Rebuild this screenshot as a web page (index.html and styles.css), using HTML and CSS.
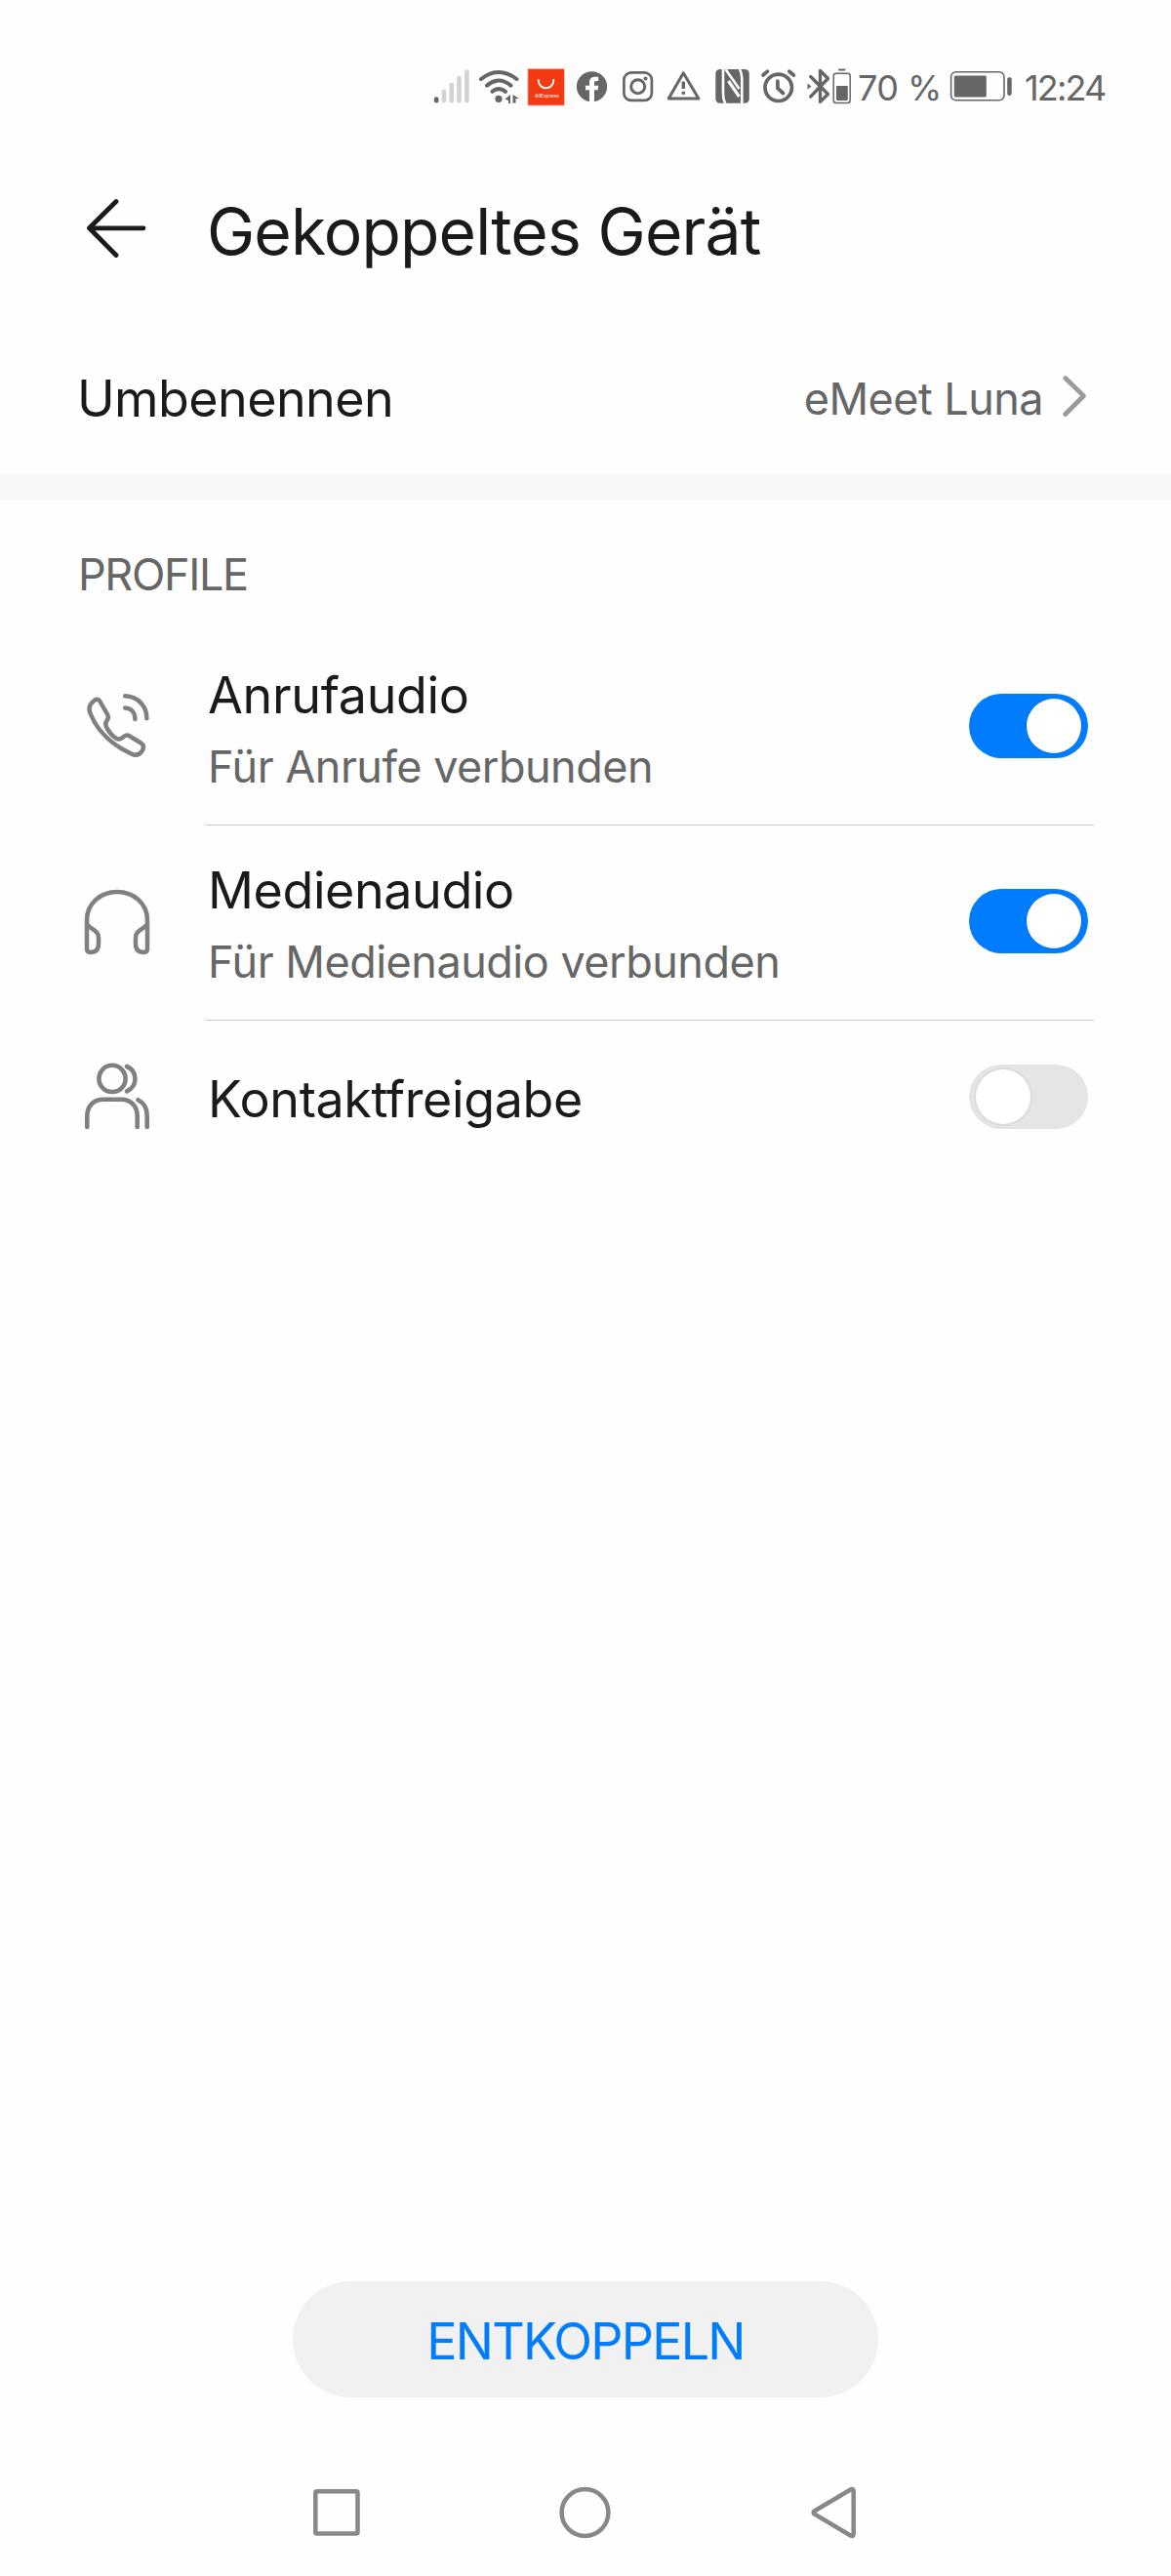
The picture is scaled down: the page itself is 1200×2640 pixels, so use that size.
FILE: index.html
```html
<!DOCTYPE html>
<html lang="de">
<head>
<meta charset="utf-8">
<title>Gekoppeltes Gerät</title>
<link rel="stylesheet" href="styles.css">
</head>
<body>
<div class="screen">
  <div class="status">
    <svg width="40" height="40" viewBox="444 70 40 40" fill="none" stroke="#d2d2d2" stroke-width="4.6" stroke-linecap="round"><path stroke="#666" d="M447.2 101.5V103.3"/><path d="M455 94V103.3M462.8 87V103.3M470.5 80V103.3M478.4 73.6V103.3"/></svg>
    <svg width="50" height="40" viewBox="484 70 50 40" fill="none" stroke="#666" stroke-width="4" stroke-linecap="round"><path d="M493 81Q511 67 529.5 81M499 87.6Q511 77.5 523.5 87.6M504.5 93.8Q511 88.4 518 93.8"/><circle cx="511" cy="101.3" r="3.6" fill="#666" stroke="none"/><path fill="#666" stroke="none" d="M517.5 101.5L523 97V106H521V103ZM525.5 97L532 101H528.5V105.5H525.5Z"/></svg>
    <svg width="46" height="40" viewBox="534 69 46 40"><rect x="540.5" y="69" width="38.3" height="38.5" fill="#f7b9aa"/><rect x="541.3" y="70" width="36.7" height="36.7" fill="#f43a12"/><path d="M551.7 81C552 92 567 92 567.4 81" fill="none" stroke="#fff" stroke-width="1.9" stroke-linecap="round"/><text class="ali" x="548" y="98.500">AliExpress</text></svg>
    <svg width="50" height="40" viewBox="580 70 50 40"><circle cx="606.5" cy="88.8" r="15.6" fill="#666"/><path fill="#fff" d="M604 105V92.3H600V87.7H604V84.5C604 80.5 606.5 78.8 610 78.8H613.2V83H611C609.5 83 609 83.8 609 85.3V87.7H613.3L612.6 92.3H609V105Z"/></svg>
    <svg width="46" height="40" viewBox="630 70 46 40" fill="none" stroke="#666" stroke-width="2.7"><rect x="639.4" y="74.4" width="28.5" height="28.5" rx="7.5"/><circle cx="653.7" cy="88.7" r="7" stroke-width="3"/><circle cx="661.5" cy="80.4" r="2" fill="#666" stroke="none"/></svg>
    <svg width="48" height="40" viewBox="676 70 48 40" fill="none" stroke="#666" stroke-width="3" stroke-linejoin="round"><path d="M700.3 74.8L685.2 101H715.9Z"/><path d="M700.3 83.5V91M700.3 93.8V96.8" stroke-width="3.4"/></svg>
    <svg width="50" height="40" viewBox="724 70 50 40"><rect x="733.3" y="71" width="34.500" height="34.700" rx="4.500" fill="#666"/><g fill="none" stroke="#fff"><path stroke-width="2.600" d="M743.500 106C741 103 741 99 741 94V71"/><path stroke-width="3.200" d="M746.500 83L757.500 99"/><path stroke-width="2.600" d="M743.500 71L757.500 91M757.800 71C760.300 74 760.300 78 760.300 83V106"/></g></svg>
    <svg width="46" height="40" viewBox="774 70 46 40" fill="none" stroke="#666" stroke-width="3.7" stroke-linecap="round"><circle cx="797.7" cy="89.8" r="13.7"/><path d="M796.9 83V90.5L802.5 95.5M782 77L786.5 73.2M808.8 73.2L813.4 77"/></svg>
    <svg width="56" height="40" viewBox="820 70 56 40" fill="none" stroke="#666" stroke-width="3.3" stroke-linejoin="round" stroke-linecap="round"><path d="M830.7 78.5L848.5 96.5L840.5 104.3V72.5L848.5 80.5L830.7 99"/><path fill="#666" stroke="none" d="M827.5 85.5L831.5 88.5L827.5 91.5Z"/><rect x="854.2" y="75.3" width="17" height="30.3" rx="2.5" stroke-width="1.5"/><path stroke-width="2" d="M860 71.5H865.5"/><rect x="857" y="88" width="11.8" height="15" rx="1" fill="#666" stroke="none"/></svg>
    <span class="status-text percent">70 %</span>
    <svg class="battery" width="68" height="40" viewBox="970 70 68 40"><rect x="974.6" y="73.8" width="54.4" height="28.9" rx="5" fill="none" stroke="#666" stroke-width="1.6"/><rect x="977.8" y="77.6" width="33" height="21.8" rx="1.5" fill="#666"/><rect x="1032.2" y="79.3" width="4.5" height="18.6" rx="1.8" fill="#666"/></svg>
    <span class="status-text clock">12:24</span>
  </div>

  <header class="header">
    <svg width="72" height="72" viewBox="84 200 72 72" fill="none" stroke="#1a1a1a" stroke-width="4.8" stroke-linecap="round" stroke-linejoin="round"><path d="M147 233.8H91.5M119 206.5L91.5 233.8L119 261.5"/></svg>
    <h1 class="title">Gekoppeltes Gerät</h1>
  </header>

  <div class="rename">
    <span class="label rename-label">Umbenennen</span>
    <span class="device">eMeet Luna</span>
    <svg width="32" height="48" viewBox="1085 384 32 48" fill="none" stroke="#9b9b9b" stroke-width="4.8" stroke-linecap="round" stroke-linejoin="round"><path d="M1090.7 387.5L1109.5 405.8L1090.7 424.5"/></svg>
  </div>

  <div class="band"></div>
  <h2 class="section">PROFILE</h2>

  <div class="row">
    <svg width="72" height="72" viewBox="84 710 72 72" fill="none" stroke="#808080" stroke-width="4.5" stroke-linecap="round" stroke-linejoin="round"><path d="M96 718.5C98 716 101 716 102.5 719L110 732C111.5 735 111 736 109.5 738.5C107.5 741.5 108 744 110 747C112.5 751 115 754 118 756C120.5 758 123 758 125.5 756C128.5 753.5 130 752.5 133 754.5L144.5 761.5C147.5 763.5 147.5 766 146 769C143.5 773 139.5 775 134.5 772.5C114 763 100 750 92.5 731C90.5 726 91.5 722 96 718.5Z"/><path d="M128.2 713.3C142 714 150.5 724 150.4 736.3M128.2 725.6C135 726 138.5 731 138.4 737"/></svg>
    <div class="row-body">
      <div class="texts"><span class="label">Anrufaudio</span><span class="sub">Für Anrufe verbunden</span></div>
      <div class="switch switch-on"><i class="knob"></i></div>
    </div>
  </div>
  <div class="row">
    <svg width="72" height="72" viewBox="84 910 72 72" fill="none" stroke="#808080" stroke-width="4.5" stroke-linecap="round" stroke-linejoin="round"><path d="M89 947V972C89 974.5 90 976 92.5 976C98 976 101 973 101 967.5V961C101 953 93 953 89 947V943C89 926 103 914 120 914C137 914 151 926 151 943V947C147 953 139 953 139 961V967.5C139 973 142 976 147.5 976C150 976 151 974.5 151 972V947"/></svg>
    <div class="row-body">
      <div class="texts"><span class="label media">Medienaudio</span><span class="sub">Für Medienaudio verbunden</span></div>
      <div class="switch switch-on"><i class="knob"></i></div>
    </div>
  </div>
  <div class="row row-last">
    <svg width="72" height="72" viewBox="84 1088 72 72" fill="none" stroke="#808080" stroke-width="4.6" stroke-linecap="round"><circle cx="115" cy="1105.4" r="13.6"/><path d="M130 1093C141 1097.5 141.5 1113 130 1118.3M89.3 1155V1144C89.3 1133.5 96 1126.7 106 1126.7H124C134 1126.7 140.7 1133.5 140.7 1144V1155M141.5 1127.2C148 1130.5 150.7 1136 150.7 1143V1155"/></svg>
    <div class="row-body">
      <div class="texts"><span class="label contact">Kontaktfreigabe</span></div>
      <div class="switch"><i class="knob"></i></div>
    </div>
  </div>

  <button class="unpair">ENTKOPPELN</button>

  <nav class="nav">
    <svg width="60" height="60" viewBox="315 2545 60 60"><rect x="323.3" y="2553.3" width="43.2" height="43.2" rx="1.5"/></svg>
    <svg width="60" height="60" viewBox="570 2545 60 60"><circle cx="599.5" cy="2575" r="23.9"/></svg>
    <svg width="60" height="60" viewBox="825 2545 60 60"><path d="M834.5 2573.5L871.5 2551.5Q874.7 2550 874.7 2553V2597Q874.7 2600 871.5 2598.5L834.5 2576.5Q832.8 2575 834.5 2573.5Z"/></svg>
  </nav>
</div>
</body>
</html>
```
FILE: styles.css
```css
* { box-sizing: border-box; }
body { margin: 0; background: #fefefe; color: #1a1a1a; font-family: Inter, "Liberation Sans", sans-serif; }
svg { display: block; flex: none; }
.screen { width: 1200px; height: 2640px; display: flex; flex-direction: column; }

.status { height: 142px; padding: 38px 0 0 444px; display: flex; align-items: center; color: #666; }
.status-text { font-size: 36px; line-height: 40px; white-space: nowrap; }
.percent { width: 94px; padding-left: 3px; letter-spacing: -.55px; }
.clock { padding-left: 12px; letter-spacing: -1.84px; }
.ali { font: 5px Inter, sans-serif; fill: #fff; }

.header { height: 188px; padding-left: 84px; display: flex; align-items: center; gap: 56px; }
.title { margin: 0; padding-top: 2px; font-size: 66px; line-height: 80px; font-weight: 400; letter-spacing: -.88px; }

.rename { height: 156px; padding: 0 82px 0 79px; display: flex; align-items: center; }
.label { padding-top: 1px; font-size: 52px; line-height: 74px; letter-spacing: -.32px; }
.rename-label { flex: 1; letter-spacing: -.58px; }
.device { margin-right: 17px; font-size: 45px; letter-spacing: -.54px; color: #666; }

.band { height: 27px; background: #f7f7f7; }
.section { height: 133px; margin: 0; padding: 45px 0 0 80px; font-size: 45px; line-height: 61px; font-weight: 400; letter-spacing: -1.37px; color: #666; }

.row { height: 200px; padding: 0 79px 0 84px; display: flex; align-items: center; gap: 55px; }
.row-body { flex: 1; height: 100%; padding: 0 6px 3px 2px; display: flex; align-items: center; justify-content: space-between; border-bottom: 1px solid #c8cacb; }
.texts { margin-top: 10px; display: flex; flex-direction: column; }
.media { letter-spacing: -.41px; }
.contact { letter-spacing: -.38px; }
.sub { margin-top: -1px; font-size: 45px; line-height: 74px; letter-spacing: -.5px; color: #666; }
.row-last { height: 156px; }
.row-last .row-body { padding-bottom: 0; border: 0; }
.row-last .texts { margin-top: 4px; }

.switch { width: 122px; height: 66px; padding: 5px 7px; display: flex; border-radius: 33px; background: #e5e5e5; }
.knob { width: 56px; height: 56px; border-radius: 50%; background: #fff; box-shadow: 0 0 0 2px rgba(0, 0, 0, .04); }
.switch-on { justify-content: flex-end; background: #007dff; }

.unpair { width: 600px; height: 119px; margin: auto auto 0; padding: 3px 0 0; border: 0; border-radius: 60px; background: #f1f1f1; color: #007dff; font: 52px Inter, sans-serif; letter-spacing: -1.78px; }
.nav { height: 183px; padding-top: 88px; display: flex; justify-content: center; gap: 195px; }
.nav svg { fill: none; stroke: #888; stroke-width: 4.5px; }
```
